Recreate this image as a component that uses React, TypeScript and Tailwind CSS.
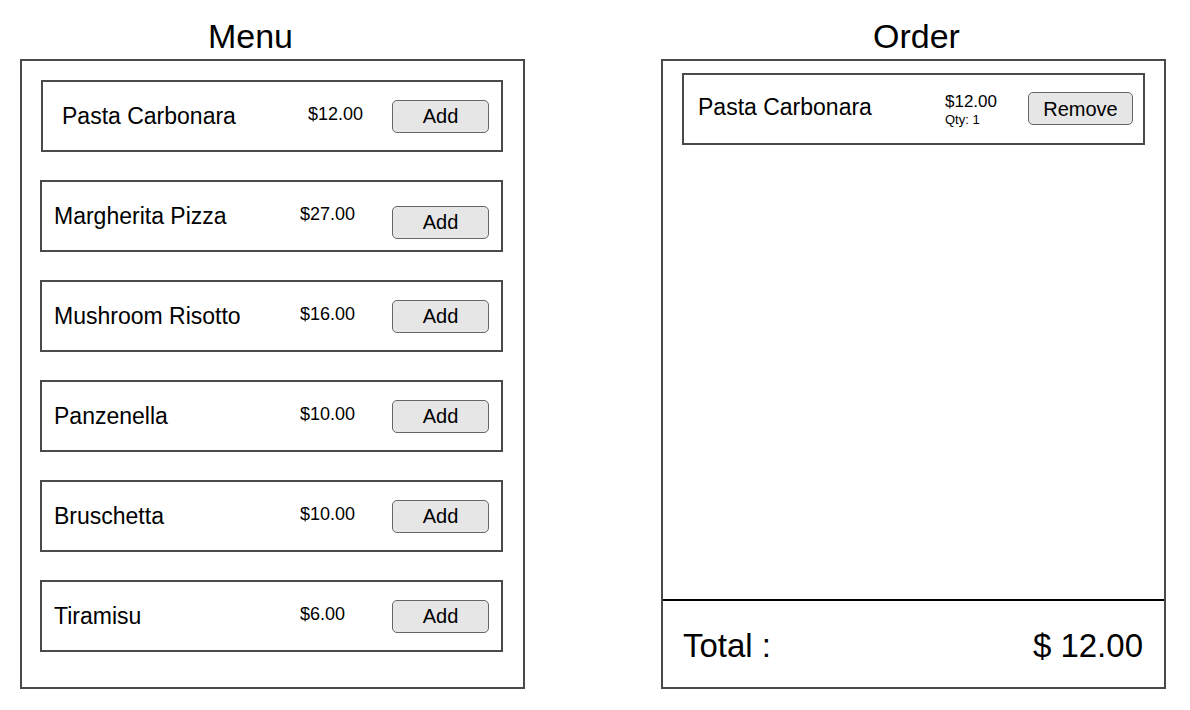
const menu = [
  { name: "Pasta Carbonara", price: "$12.00", nameCls: "pl-[19px]", priceCls: "left-[265px]", btnCls: "" },
  { name: "Margherita Pizza", price: "$27.00", nameCls: "pl-[12px]", priceCls: "left-[258px]", btnCls: "mt-[12px]" },
  { name: "Mushroom Risotto", price: "$16.00", nameCls: "pl-[12px]", priceCls: "left-[258px]", btnCls: "" },
  { name: "Panzenella", price: "$10.00", nameCls: "pl-[12px]", priceCls: "left-[258px]", btnCls: "" },
  { name: "Bruschetta", price: "$10.00", nameCls: "pl-[12px]", priceCls: "left-[258px]", btnCls: "" },
  { name: "Tiramisu", price: "$6.00", nameCls: "pl-[12px]", priceCls: "left-[258px]", btnCls: "" },
]

function Btn({ label, w }: { label: string; w: string }) {
  return (
    <button
      className={`${w} h-[33px] rounded-[5px] border border-[#666] bg-[#e6e6e6] text-[20px] leading-none text-black`}
    >
      {label}
    </button>
  )
}

export default function App() {
  return (
    <div
      className="w-[1190px] h-[710px] bg-white text-black flex pl-[20px] gap-[136px]"
      style={{ fontFamily: '"Liberation Sans", Arial, sans-serif' }}
    >
      {/* menu column */}
      <div className="w-[505px] flex flex-col">
        <div className="h-[59px] pt-[13px] pr-[44px] flex items-center justify-center text-[34px]">Menu</div>
        <div className="h-[630px] border-2 border-[#4a4a4a] pt-[19px] pl-[18px] pr-[20px] flex flex-col gap-[28px]">
          {menu.map((m, i) => (
            <div
              key={m.name}
              className={`relative h-[72px] border-2 border-[#4a4a4a] flex items-center ${i === 0 ? "ml-[1px]" : ""}`}
            >
              <span className={`${m.nameCls} text-[23px]`}>{m.name}</span>
              <span className={`absolute ${m.priceCls} top-1/2 -translate-y-[55%] text-[18px]`}>{m.price}</span>
              <div className={`ml-auto mr-[12px] ${m.btnCls}`}>
                <Btn label="Add" w="w-[97px]" />
              </div>
            </div>
          ))}
        </div>
      </div>

      {/* order column */}
      <div className="w-[505px] flex flex-col">
        <div className="h-[59px] pt-[13px] pl-[6px] flex items-center justify-center text-[34px]">Order</div>
        <div className="h-[630px] border-2 border-[#4a4a4a] flex flex-col">
          <div className="flex-1 pt-[12px] px-[19px]">
            <div className="h-[72px] border-2 border-[#4a4a4a] flex items-center pl-[14px] pr-[10px]">
              <span className="text-[23px] -mt-[4px]">Pasta Carbonara</span>
              <div className="ml-auto mr-[31px] flex flex-col mt-[1px]">
                <span className="text-[17px] leading-[20px]">$12.00</span>
                <span className="text-[13px] leading-[16px]">Qty: 1</span>
              </div>
              <div className="-mt-[1px]">
                <Btn label="Remove" w="w-[105px]" />
              </div>
            </div>
          </div>
          <div className="h-[88px] border-t-2 border-black flex items-center justify-between pl-[20px] pr-[21px] pt-[3px] text-[33px]">
            <span>Total :</span>
            <span>$ 12.00</span>
          </div>
        </div>
      </div>
    </div>
  )
}
